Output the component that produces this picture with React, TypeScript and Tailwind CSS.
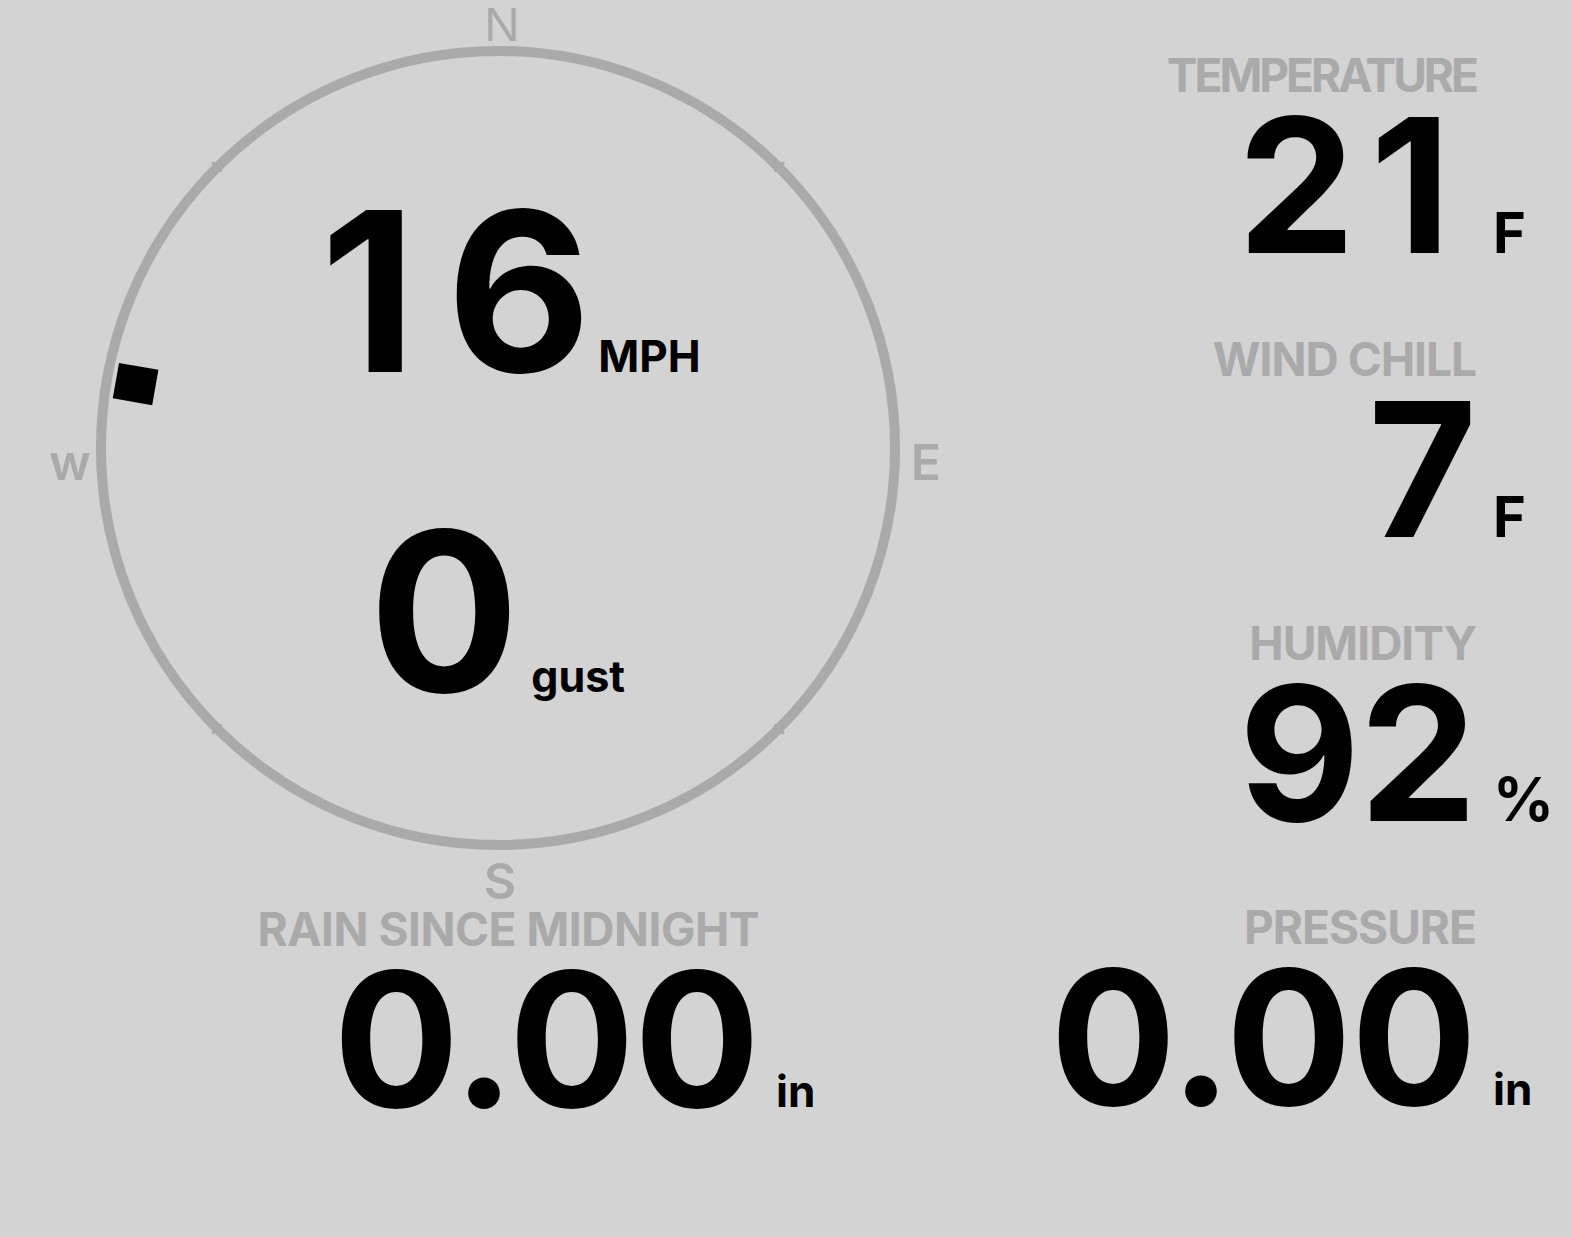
import React from "react";

const font = { fontFamily: "Inter, 'Noto Sans', sans-serif" };

function Compass({ bearing }: { bearing: number }) {
  const cx = 498;
  const cy = 448;
  const r = 397;
  return (
    <svg width="1000" height="910" className="absolute inset-0">
      <circle cx={cx} cy={cy} r={r} fill="none" stroke="#aaaaaa" strokeWidth="10" />
      {[45, 135, 225, 315].map((a) => (
        <line
          key={a}
          x1={cx}
          y1={cy - r + 6}
          x2={cx}
          y2={cy - r - 7}
          stroke="#aaaaaa"
          strokeWidth="3"
          transform={`rotate(${a} ${cx} ${cy})`}
        />
      ))}
      <text x="502" y="41" textAnchor="middle" fill="#aaaaaa" fontSize="49" style={{ fontFamily: "'Liberation Sans', Arial, sans-serif" }}>
        N
      </text>
      <text x="926" y="480" textAnchor="middle" fill="#aaaaaa" fontSize="50" fontWeight="600" style={font}>
        E
      </text>
      <text x="500" y="899" textAnchor="middle" fill="#aaaaaa" fontSize="50" fontWeight="600" style={font}>
        S
      </text>
      <text x="70" y="480" textAnchor="middle" fill="#aaaaaa" fontSize="50" fontWeight="600" style={font}>
        w
      </text>
      <rect
        x={cx - 18}
        y={cy - 388}
        width="36"
        height="40"
        fill="#000"
        transform={`rotate(${bearing} ${cx} ${cy})`}
      />
    </svg>
  );
}

function Stat({
  label,
  value,
  unit,
  unitSize,
  col,
  labelTrack = "tracking-[-1px]",
  valueClass = "",
}: {
  label: string;
  value: React.ReactNode;
  unit: string;
  unitSize: string;
  col: string;
  labelTrack?: string;
  valueClass?: string;
}) {
  return (
    <div className={`grid items-baseline ${col}`}>
      <div className={`text-right text-[46px] leading-none font-bold text-[#aaaaaa] whitespace-nowrap ${labelTrack}`}>
        {label}
      </div>
      <div />
      <div className={`-mt-[6px] text-right text-[187px] leading-none font-bold tracking-[-1px] text-black ${valueClass}`}>
        {value}
      </div>
      <div className={`pl-[17px] leading-none font-bold text-black ${unitSize}`}>{unit}</div>
    </div>
  );
}

export default function App() {
  return (
    <div className="w-[1571px] h-[1237px] bg-[#d3d3d3] overflow-hidden flex" style={font}>
      <div className="w-[1000px] flex flex-col">
        <div className="relative h-[910px]">
          <Compass bearing={280} />
          <div className="relative flex flex-col items-center pt-[180px] gap-[97px] w-[1000px]">
            <div className="flex items-baseline leading-none font-bold text-black ml-[21px]">
              <span className="text-[223px] leading-none">
                <span className="mr-[30px]">1</span>6
              </span>
              <span className="text-[44px] ml-[7px]">MPH</span>
            </div>
            <div className="flex items-baseline leading-none font-bold text-black -ml-[6px]">
              <span className="text-[223px] leading-none">0</span>
              <span className="text-[43px] ml-[12px]">gust</span>
            </div>
          </div>
        </div>
        <Stat
          label="RAIN SINCE MIDNIGHT"
          value="0.00"
          unit="in"
          unitSize="text-[44px]"
          col="grid-cols-[759px_auto] -mt-[4px]"
          labelTrack="tracking-[-0.5px]"
        />
      </div>
      <div className="flex-1 flex flex-col pt-[52px] gap-[57px]">
        <Stat
          label="TEMPERATURE"
          value={
            <>
              <span className="mr-[16px]">2</span>1
            </>
          }
          valueClass="pr-[26px]"
          unit="F"
          unitSize="text-[56px]"
          col="grid-cols-[476px_auto]"
          labelTrack="tracking-[-3px]"
        />
        <Stat label="WIND CHILL" value="7" unit="F" unitSize="text-[56px]" col="grid-cols-[476px_auto]" />
        <Stat label="HUMIDITY" value="92" unit="%" unitSize="text-[60px]" col="grid-cols-[476px_auto]" />
        <Stat label="PRESSURE" value="0.00" unit="in" unitSize="text-[44px]" col="grid-cols-[476px_auto]" />
      </div>
    </div>
  );
}
